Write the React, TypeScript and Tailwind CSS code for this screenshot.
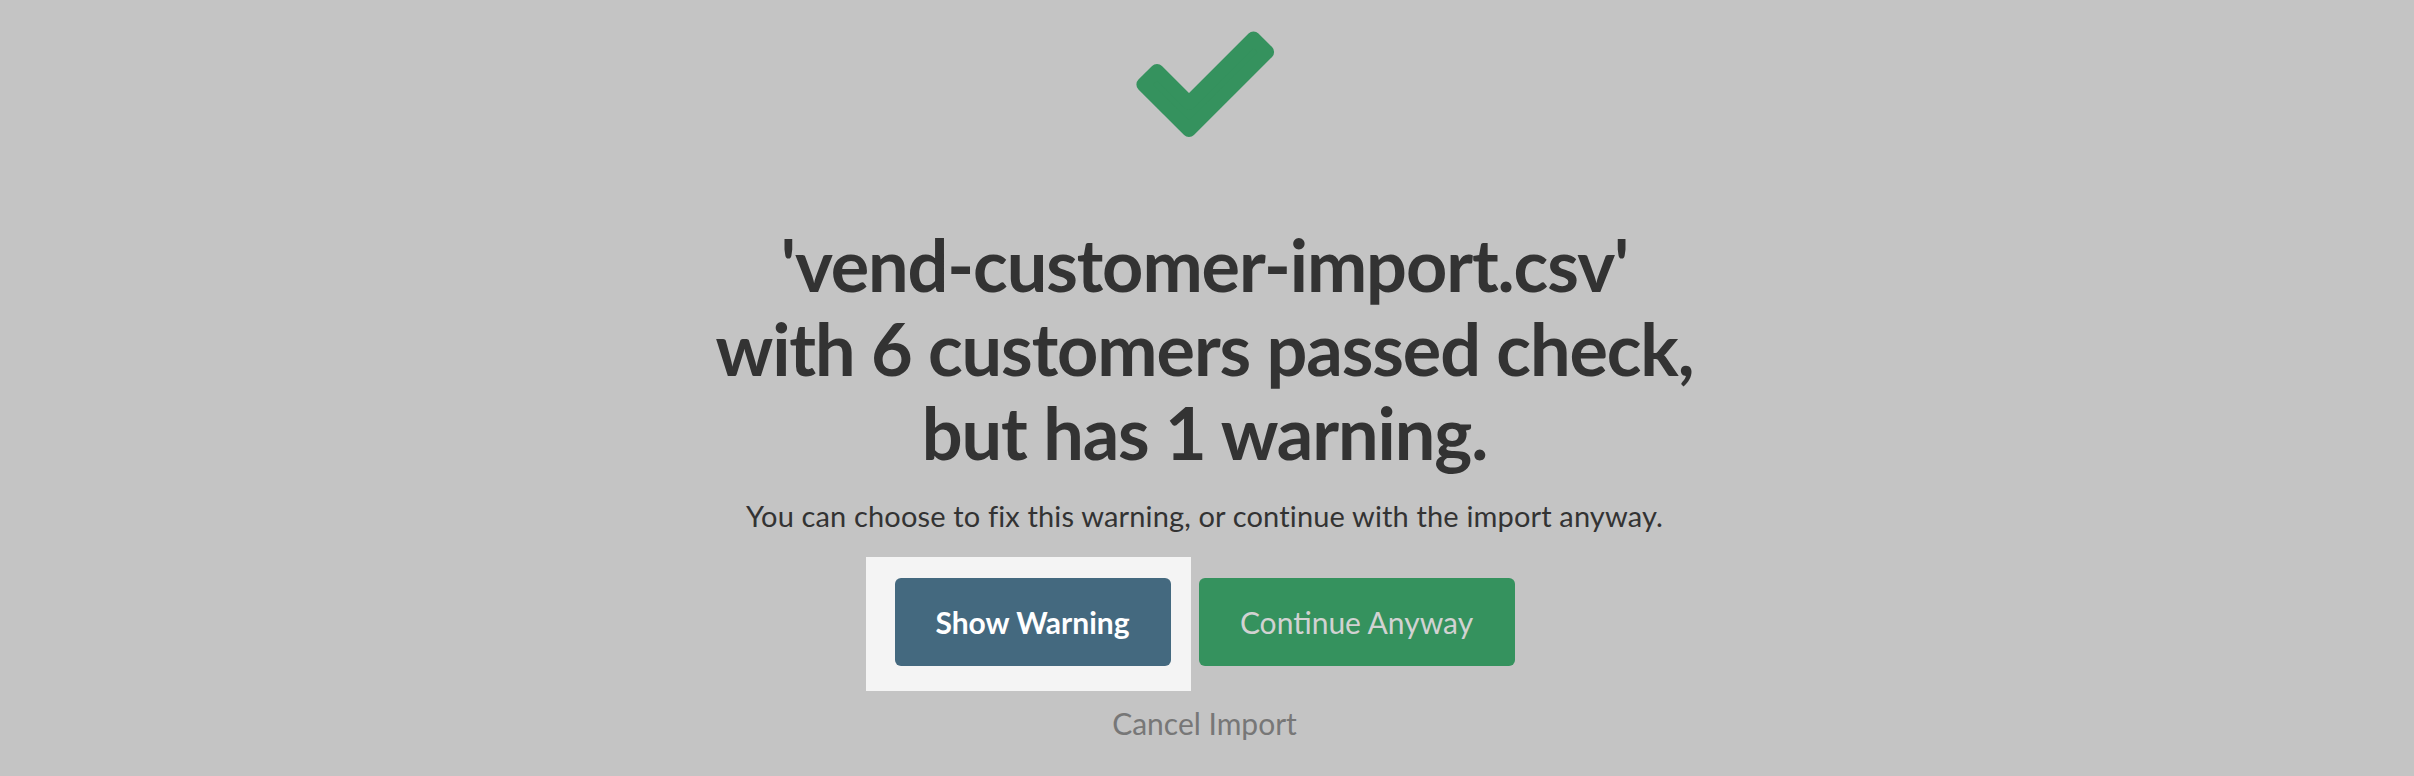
import React from "react";

export default function App() {
  return (
    <div
      className="min-h-[776px] w-full bg-[#c4c4c4] flex flex-col items-center pr-[5px] pt-[32px] text-[#333333]"
      style={{ fontFamily: "Lato, 'Open Sans', sans-serif" }}
    >
      <svg
        width="138"
        height="106"
        viewBox="0 0 138 106"
        overflow="visible"
        aria-hidden="true"
      >
        <polygon
          points="117.5,6.4 131.1,20 53,98.1 7.4,52.5 21,38.9 53,70.9"
          fill="#35925e"
          stroke="#35925e"
          strokeWidth="14"
          strokeLinejoin="round"
        />
      </svg>

      <h1 className="mt-[84px] text-center text-[72px] leading-[84px] font-bold tracking-[-1.1px] text-[#333333]">
        'vend-customer-import.csv'
        <br />
        with 6 customers passed check,
        <br />
        but has 1 warning.
      </h1>

      <p className="mt-[21px] text-[29px] leading-[42px] tracking-[0.15px] text-[#333333]">
        You can choose to fix this warning, or continue with the import anyway.
      </p>

      <div className="mt-[41px] flex items-center gap-[28px]">
        <div className="relative">
          <span className="absolute -left-[29px] -right-[20px] -top-[21px] -bottom-[25px] bg-[#f4f4f4]" />
          <button className="relative h-[88px] w-[276px] rounded-[6px] bg-[#44697f] text-[30px] font-bold text-white">
            Show Warning
          </button>
        </div>
        <button className="h-[88px] w-[316px] rounded-[6px] bg-[#35925e] text-[30px] text-[#d2d2d2]">
          Continue Anyway
        </button>
      </div>

      <a className="mt-[36px] text-[30px] leading-[42px] text-[#777777]">Cancel Import</a>
    </div>
  );
}
